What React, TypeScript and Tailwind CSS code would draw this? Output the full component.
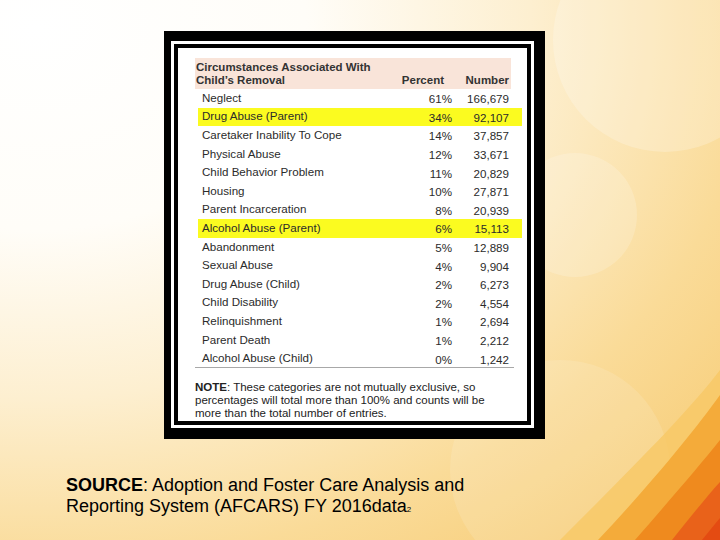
import React from 'react';

// Slide: table of removal circumstances inside a double black frame, on a warm bokeh background.

type Row = { label: string; pct: string; num: string; hl?: boolean };

const ROWS: Row[] = [
  { label: 'Neglect', pct: '61%', num: '166,679' },
  { label: 'Drug Abuse (Parent)', pct: '34%', num: '92,107', hl: true },
  { label: 'Caretaker Inability To Cope', pct: '14%', num: '37,857' },
  { label: 'Physical Abuse', pct: '12%', num: '33,671' },
  { label: 'Child Behavior Problem', pct: '11%', num: '20,829' },
  { label: 'Housing', pct: '10%', num: '27,871' },
  { label: 'Parent Incarceration', pct: '8%', num: '20,939' },
  { label: 'Alcohol Abuse (Parent)', pct: '6%', num: '15,113', hl: true },
  { label: 'Abandonment', pct: '5%', num: '12,889' },
  { label: 'Sexual Abuse', pct: '4%', num: '9,904' },
  { label: 'Drug Abuse (Child)', pct: '2%', num: '6,273' },
  { label: 'Child Disability', pct: '2%', num: '4,554' },
  { label: 'Relinquishment', pct: '1%', num: '2,694' },
  { label: 'Parent Death', pct: '1%', num: '2,212' },
  { label: 'Alcohol Abuse (Child)', pct: '0%', num: '1,242' },
];

function Backdrop() {
  return (
    <svg className="absolute inset-0" width="720" height="540" viewBox="0 0 720 540">
      <defs>
        <radialGradient id="bg" cx="0.05" cy="0.05" r="1.25">
          <stop offset="0" stopColor="#ffffff" />
          <stop offset="0.3" stopColor="#fffdf8" />
          <stop offset="0.55" stopColor="#fdefd0" />
          <stop offset="0.8" stopColor="#fadb98" />
          <stop offset="1" stopColor="#f7cd78" />
        </radialGradient>
      </defs>
      <rect width="720" height="540" fill="url(#bg)" />
      <circle cx="665" cy="40" r="112" fill="#ffffff" opacity="0.22" />
      <circle cx="575" cy="215" r="62" fill="#ffffff" opacity="0.18" />
      <circle cx="560" cy="470" r="110" fill="#ffffff" opacity="0.12" />
      <path d="M560 540 C630 470 690 410 720 370 L720 540 Z" fill="#f8c865" opacity="0.8" />
      <path d="M598 540 C650 485 695 430 720 395 L720 540 Z" fill="#f4ab3a" />
      <path d="M635 540 C670 500 700 465 720 440 L720 540 Z" fill="#ef8a1e" />
      <path d="M672 540 C692 515 708 495 720 482 L720 540 Z" fill="#e9621a" />
      <path d="M702 540 C710 530 715 524 720 518 L720 540 Z" fill="#e44b12" />
    </svg>
  );
}

export default function App() {
  return (
    <div className="relative w-[720px] h-[540px] overflow-hidden font-['Liberation_Sans',Arial,sans-serif]">
      <Backdrop />
      <div className="relative pt-[31px]">
        <div className="ml-[164px] w-[381px] h-[408px] bg-black pt-[10px] pl-[7px] pr-[11px] pb-[11px]">
          <div className="h-full border-[3px] border-white bg-black p-[4px]">
            <div className="h-full bg-white pt-[10px] pl-[17px] text-[11.6px] leading-[13px] text-[#2b2b2b]">
              <div className="flex w-[316px] h-[31px] items-end bg-[#f9e4d9] pb-[2px] font-bold text-[11.5px] text-[#333]">
                <div className="flex-1 pl-[1px]">
                  Circumstances Associated With
                  <br />
                  Child’s Removal
                </div>
                <div className="w-[60px] text-right">Percent</div>
                <div className="w-[67px] pr-[2px] text-right">Number</div>
              </div>
              <div className="ml-[3px] w-[324px]">
                {ROWS.map((r) => (
                  <div
                    key={r.label}
                    className={
                      'flex h-[18.6px] items-center ' + (r.hl ? 'bg-[#fbfb20]' : '')
                    }
                  >
                    <div className="flex-1 pl-[4px] pb-[2px]">{r.label}</div>
                    <div className="w-[60px] pt-[1px] text-right">{r.pct}</div>
                    <div className="w-[57px] pt-[1px] text-right">{r.num}</div>
                    <div className="w-[13px]" />
                  </div>
                ))}
              </div>
              <div className="w-[319px] border-t border-[#a8a8a8] -mt-[1px]" />
              <p className="mt-[13px] w-[300px] text-[11.5px] leading-[13px] text-[#222]">
                <span className="font-bold">NOTE</span>: These categories are not mutually exclusive, so
                percentages will total more than 100% and counts will be more than the total
                number of entries.
              </p>
            </div>
          </div>
        </div>
        <p className="ml-[66px] mt-[36px] text-[18px] leading-[21px] text-black">
          <span className="font-bold">SOURCE</span>: Adoption and Foster Care Analysis and
          <br />
          Reporting System (AFCARS) FY 2016data<span className="text-[8px]">2</span>
        </p>
      </div>
    </div>
  );
}
